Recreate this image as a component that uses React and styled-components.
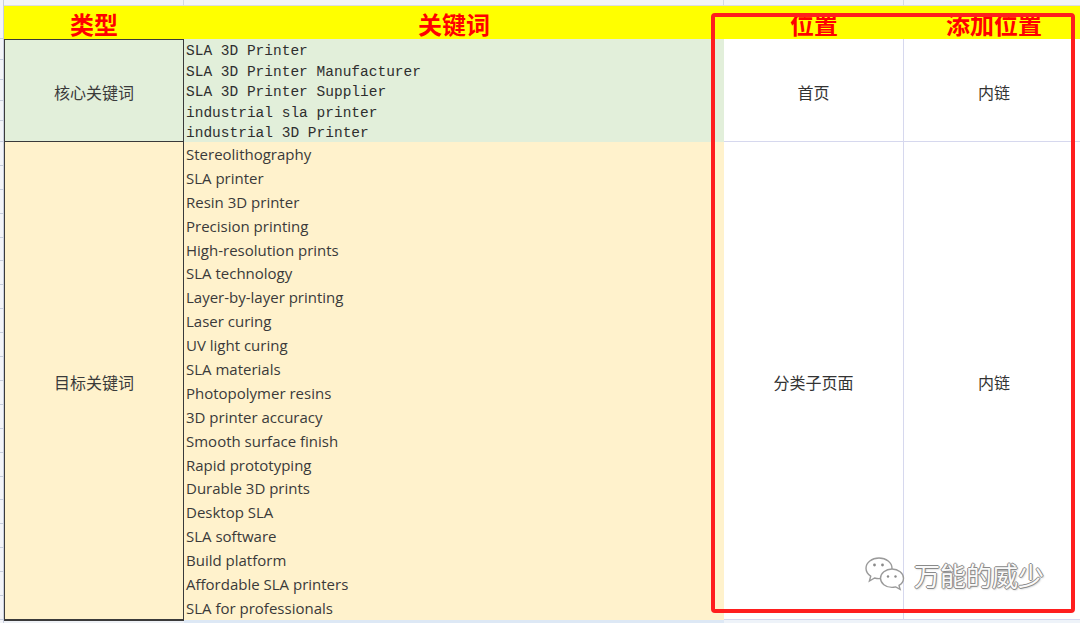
import React from "react";
import styled, { createGlobalStyle } from "styled-components";

const GlobalStyle = createGlobalStyle`
  html, body { margin: 0; padding: 0; background: #ffffff; }
  body { width: 1080px; height: 623px; overflow: hidden; }
`;

const core = [
  "SLA 3D Printer",
  "SLA 3D Printer Manufacturer",
  "SLA 3D Printer Supplier",
  "industrial sla printer",
  "industrial 3D Printer",
];

const target = [
  "Stereolithography",
  "SLA printer",
  "Resin 3D printer",
  "Precision printing",
  "High-resolution prints",
  "SLA technology",
  "Layer-by-layer printing",
  "Laser curing",
  "UV light curing",
  "SLA materials",
  "Photopolymer resins",
  "3D printer accuracy",
  "Smooth surface finish",
  "Rapid prototyping",
  "Durable 3D prints",
  "Desktop SLA",
  "SLA software",
  "Build platform",
  "Affordable SLA printers",
  "SLA for professionals",
];

export default function App() {
  return (
    <>
      <GlobalStyle />
      <Page>
        <Sheet>
          <Gutter />
          <TopCell />
          <TopCell />
          <TopCell />
          <TopCell $last />

          <Gutter $step={33} />
          <HeaderCell>类型</HeaderCell>
          <HeaderCell>关键词</HeaderCell>
          <HeaderCell>位置</HeaderCell>
          <HeaderCell>添加位置</HeaderCell>

          <Gutter $step={20.6} />
          <TypeCell $bg="#e2efda" $top>核心关键词</TypeCell>
          <KeywordList $bg="#e2efda" $mono $line={20.6}>
            {core.map((k) => (
              <li key={k}>{k}</li>
            ))}
          </KeywordList>
          <PlainCell>首页</PlainCell>
          <PlainCell $last>内链</PlainCell>

          <Gutter $step={23.9} />
          <TypeCell $bg="#fff2cc">目标关键词</TypeCell>
          <KeywordList $bg="#fff2cc" $line={23.9}>
            {target.map((k) => (
              <li key={k}>{k}</li>
            ))}
          </KeywordList>
          <PlainCell>分类子页面</PlainCell>
          <PlainCell $last>内链</PlainCell>

          <Gutter />
          <BottomCell $bg="#eef1f6" $dark />
          <BottomCell $bg="#dde8f5" />
          <BottomCell $bg="#eef3f9" />
          <BottomCell $bg="#eef3f9" />
        </Sheet>

        <Highlight />

        <Watermark>
          <WeChatIcon />
          <span>万能的威少</span>
        </Watermark>
      </Page>
    </>
  );
}

function WeChatIcon() {
  return (
    <svg width="44" height="38" viewBox="0 0 44 38" fill="none">
      <g stroke="#9a9a9a" strokeWidth="1.4" fill="#ffffff">
        <path d="M15 3C7.8 3 2 7.6 2 13.3c0 3.2 1.8 6 4.7 7.9L5.4 26l5.2-3c1.4.4 2.9.6 4.4.6 7.2 0 13-4.6 13-10.3S22.2 3 15 3z" />
        <path d="M28 14c-6.4 0-11.5 4.1-11.5 9.2s5.1 9.2 11.5 9.2c1.3 0 2.5-.2 3.7-.5l4.4 2.5-1.1-4c2.8-1.7 4.5-4.3 4.5-7.2C39.5 18.1 34.4 14 28 14z" />
      </g>
      <g fill="#8a8a8a">
        <circle cx="10.5" cy="10" r="1.4" />
        <circle cx="18.5" cy="10" r="1.4" />
        <circle cx="24" cy="21.5" r="1.2" />
        <circle cx="31.5" cy="21.5" r="1.2" />
      </g>
    </svg>
  );
}

const Page = styled.div`
  position: relative;
  width: 1080px;
  height: 623px;
  overflow: hidden;
  background: #ffffff;
`;

const Sheet = styled.div`
  display: grid;
  grid-template-columns: 4px 180px 540px 180px 180px;
  grid-template-rows: 6px 33px 103px 478px 6px;
  width: 1084px;
`;

const Gutter = styled.div`
  background-color: #f3f4f8;
  border-right: 1px solid #c8cedd;
  background-image: ${(p) =>
    p.$step
      ? `repeating-linear-gradient(to bottom, transparent 0, transparent ${p.$step - 1}px, #c8cedd ${p.$step - 1}px, #c8cedd ${p.$step}px)`
      : "none"};
`;

const TopCell = styled.div`
  background: #f3f4f8;
  border-bottom: 1px solid #dcdde2;
  border-right: ${(p) => (p.$last ? "none" : "1px solid #d4d8e4")};
`;

const HeaderCell = styled.div`
  background: #ffff00;
  color: #ff0000;
  font-family: "Noto Sans CJK SC", sans-serif;
  font-weight: 700;
  font-size: 24px;
  line-height: 33px;
  text-align: center;
  padding-top: 1px;
`;

const TypeCell = styled.div`
  background: ${(p) => p.$bg};
  border: 1px solid #3a3a3a;
  border-top-width: ${(p) => (p.$top ? "1px" : "0")};
  display: flex;
  align-items: center;
  justify-content: center;
  padding-top: 3px;
  font-family: "Noto Sans CJK SC", sans-serif;
  font-size: 16px;
  color: #3a3a3a;
`;

const KeywordList = styled.ul`
  list-style: none;
  margin: 0;
  padding: ${(p) => (p.$mono ? "2px 0 0 2px" : "1px 0 0 2px")};
  background: ${(p) => p.$bg};
  font-family: ${(p) =>
    p.$mono ? `"Liberation Mono", monospace` : `"Open Sans", sans-serif`};
  font-size: ${(p) => (p.$mono ? "14.5px" : "15px")};
  color: ${(p) => (p.$mono ? "#2e2e2e" : "#3a3a3a")};
  overflow: hidden;

  li {
    height: ${(p) => p.$line}px;
    line-height: ${(p) => p.$line}px;
    white-space: nowrap;
  }
`;

const PlainCell = styled.div`
  background: #ffffff;
  border-bottom: 1px solid #d6d8ee;
  border-right: ${(p) => (p.$last ? "none" : "1px solid #d6d8ee")};
  display: flex;
  align-items: center;
  justify-content: center;
  padding-top: 3px;
  font-family: "Noto Sans CJK SC", sans-serif;
  font-size: 16px;
  color: #333333;
`;

const BottomCell = styled.div`
  background: ${(p) => p.$bg};
  border-top: ${(p) => (p.$dark ? "1px solid #3a3a3a" : "none")};
`;

const Highlight = styled.div`
  position: absolute;
  left: 711px;
  top: 13px;
  width: 356px;
  height: 592px;
  border: 4px solid #ff1e1e;
  border-radius: 4px;
  pointer-events: none;
`;

const Watermark = styled.div`
  position: absolute;
  left: 864px;
  top: 555px;
  display: flex;
  align-items: center;
  gap: 6px;

  span {
    font-family: "Noto Sans CJK SC", sans-serif;
    font-size: 26px;
    color: #fafafa;
    text-shadow: -1px 0 0 #8a8a8a, 1px 0 0 #8a8a8a, 0 -1px 0 #8a8a8a,
      0 1px 0 #8a8a8a, 1px 1px 2px #aaaaaa;
  }
`;
